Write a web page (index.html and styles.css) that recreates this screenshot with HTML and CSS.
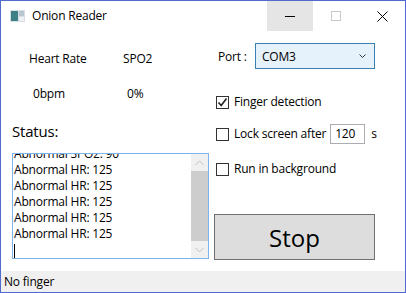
FILE: index.html
```html
<!DOCTYPE html>
<html lang="en">
<head>
  <meta charset="UTF-8" />
  <title>Onion Reader</title>
  <link rel="stylesheet" href="styles.css">
</head>
<body>
  <div class="window">
    <div class="titlebar">
      <svg class="app-icon" width="15" height="12" viewBox="0 0 15 12">
        <rect x="0" y="0" width="15" height="12" fill="#d8dee6"/>
        <rect x="1" y="1" width="7" height="10" fill="#3f7f86"/>
        <rect x="9" y="1" width="5" height="5" fill="#b9c6d2"/>
        <rect x="9" y="7" width="5" height="4" fill="#eef1f4"/>
      </svg>
      <span class="title">Onion Reader</span>
      <div class="caption-buttons">
        <div class="cap-btn hover">
          <svg width="10" height="10" viewBox="0 0 10 10"><line x1="0" y1="5.5" x2="10" y2="5.5" stroke="#000" stroke-width="1"/></svg>
        </div>
        <div class="cap-btn">
          <svg width="10" height="10" viewBox="0 0 10 10"><rect x="0.5" y="0.5" width="9" height="9" fill="none" stroke="#c8c8c8" stroke-width="1"/></svg>
        </div>
        <div class="cap-btn">
          <svg width="11" height="11" viewBox="0 0 11 11"><path d="M0.5 0.5 L10.5 10.5 M10.5 0.5 L0.5 10.5" stroke="#000" stroke-width="1"/></svg>
        </div>
      </div>
    </div>

    <div class="main">
      <div class="left">
        <div class="readings">
          <span class="label">Heart Rate</span>
          <span class="label">SPO2</span>
          <span class="value">0bpm</span>
          <span class="value">0%</span>
        </div>
        <div class="status-label">Status:</div>
        <div class="log">
          <div class="log-text">
            <div class="log-line cut">Abnormal SPO2: 90</div>
            <div class="log-line">Abnormal HR: 125</div>
            <div class="log-line">Abnormal HR: 125</div>
            <div class="log-line">Abnormal HR: 125</div>
            <div class="log-line">Abnormal HR: 125</div>
            <div class="log-line">Abnormal HR: 125</div>
            <div class="log-line"><span class="caret"></span></div>
          </div>
          <div class="scrollbar">
            <div class="arrow">
              <svg width="9" height="6" viewBox="0 0 9 6"><path d="M0.5 5 L4.5 1 L8.5 5" fill="none" stroke="#c0c0c0" stroke-width="1"/></svg>
            </div>
            <div class="thumb"></div>
            <div class="arrow">
              <svg width="9" height="6" viewBox="0 0 9 6"><path d="M0.5 1 L4.5 5 L8.5 1" fill="none" stroke="#c0c0c0" stroke-width="1"/></svg>
            </div>
          </div>
        </div>
      </div>

      <div class="right">
        <div class="port-row">
          <span class="port-label">Port :</span>
          <div class="combo">
            <span>COM3</span>
            <svg width="7" height="5" viewBox="0 0 7 5"><path d="M0.5 0.5 L3.5 3.5 L6.5 0.5" fill="none" stroke="#333" stroke-width="1"/></svg>
          </div>
        </div>

        <div class="check-row first">
          <span class="box">
            <svg width="11" height="11" viewBox="0 0 11 11"><path d="M1.5 5.5 L4.2 8.5 L9.5 1.5" fill="none" stroke="#222" stroke-width="1.6"/></svg>
          </span>
          <span>Finger detection</span>
        </div>

        <div class="check-row lock">
          <span class="box"></span>
          <span>Lock screen after</span>
          <span class="num-input">120</span>
          <span class="unit">s</span>
        </div>

        <div class="check-row third">
          <span class="box"></span>
          <span>Run in background</span>
        </div>

        <button class="stop-btn">Stop</button>
      </div>
    </div>

    <div class="statusbar">No finger</div>
  </div>
</body>
</html>
```

FILE: styles.css
```css
body {
  margin: 0;
  background-color: #fff;
  font-family: "Open Sans", "Noto Sans", sans-serif;
  font-size: 12px;
  letter-spacing: -0.2px;
  color: #000;
}

.window {
  width: 406px;
  height: 293px;
  box-sizing: border-box;
  border: 1px solid #4f6bcf;
  display: flex;
  flex-direction: column;
  background-color: #fff;
}

.titlebar {
  height: 30px;
  display: flex;
  align-items: center;
  flex-shrink: 0;
}

.app-icon {
  margin-left: 9px;
  margin-right: 7px;
}

.title {
  font-size: 12px;
  line-height: 16px;
}

.caption-buttons {
  margin-left: auto;
  display: flex;
  height: 30px;
}

.cap-btn {
  width: 46px;
  height: 30px;
  display: flex;
  align-items: center;
  justify-content: center;
}

.cap-btn.hover {
  background-color: #e5e5e5;
}

.main {
  flex: 1;
  display: grid;
  grid-template-columns: 208px 1fr;
}

.left {
  display: flex;
  flex-direction: column;
  padding-left: 11px;
}

.readings {
  display: grid;
  grid-template-columns: 94px 60px;
  row-gap: 19px;
  margin-top: 20px;
  margin-left: 17px;
  line-height: 16px;
}

.readings .value {
  padding-left: 4px;
}

.status-label {
  font-size: 15px;
  line-height: 20px;
  margin-top: 19px;
}

.log {
  margin-top: 12px;
  height: 106px;
  box-sizing: border-box;
  border: 1px solid #7eb4ea;
  display: flex;
  overflow: hidden;
}

.log-text {
  flex: 1;
  padding-left: 1px;
  margin-top: -8px;
  line-height: 16px;
}

.log-line {
  height: 16px;
  white-space: nowrap;
}

.caret {
  display: inline-block;
  width: 1px;
  height: 15px;
  background-color: #000;
  vertical-align: top;
  margin-top: 2px;
}

.scrollbar {
  width: 17px;
  display: flex;
  flex-direction: column;
  background-color: #f0f0f0;
}

.arrow {
  height: 17px;
  display: flex;
  align-items: center;
  justify-content: center;
}

.thumb {
  flex: 1;
  background-color: #cdcdcd;
}

.right {
  display: flex;
  flex-direction: column;
  padding-left: 6px;
}

.port-row {
  display: flex;
  align-items: center;
  margin-top: 12px;
}

.port-label {
  width: 37px;
  padding-left: 3px;
}

.combo {
  width: 120px;
  height: 26px;
  box-sizing: border-box;
  border: 1px solid #3c7fb1;
  background-color: #e5f1fb;
  display: flex;
  align-items: center;
  justify-content: space-between;
  padding: 0 8px 0 6px;
}

.check-row {
  display: flex;
  align-items: center;
  line-height: 16px;
}

.check-row.first {
  margin-top: 25px;
}

.check-row.lock {
  margin-top: 14px;
  height: 20px;
}

.check-row.third {
  margin-top: 17px;
}

.box {
  width: 13px;
  height: 13px;
  box-sizing: border-box;
  border: 1px solid #333;
  background-color: #fff;
  margin-left: 1px;
  margin-right: 5px;
  display: flex;
  align-items: center;
  justify-content: center;
}

.num-input {
  width: 35px;
  height: 20px;
  box-sizing: border-box;
  border: 1px solid #abadb3;
  margin-left: 4px;
  padding-left: 4px;
  line-height: 18px;
}

.unit {
  margin-left: 6px;
}

.stop-btn {
  margin-top: 37px;
  width: 161px;
  height: 46px;
  box-sizing: border-box;
  border: 1px solid #707070;
  background-color: #dddddd;
  font-family: "Open Sans", "Noto Sans", sans-serif;
  font-size: 24px;
  color: #000;
  padding: 0;
  margin-left: -1px;
}

.statusbar {
  height: 21px;
  flex-shrink: 0;
  background-color: #f0f0f0;
  padding-left: 3px;
  line-height: 21px;
}
```
